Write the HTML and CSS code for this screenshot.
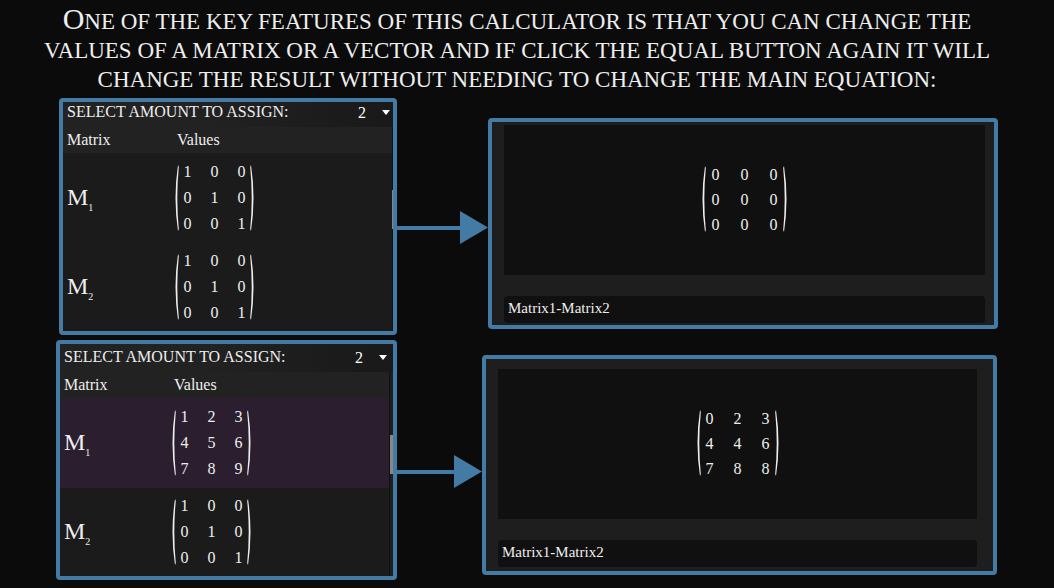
FILE: index.html
```html
<!DOCTYPE html>
<html lang="en">
<head>
<meta charset="utf-8">
<title>Matrix calculator</title>
<link rel="stylesheet" href="styles.css">
</head>
<body>
<svg class="defs" aria-hidden="true">
  <symbol id="paren" viewBox="0 0 5 68" preserveAspectRatio="none"><path d="M4 0Q-1 34 4 68L4.800 66Q1.800 34 4.800 2Z" fill="#eee"/></symbol>
  <symbol id="caret" viewBox="0 0 8 5"><path d="M0 0H8L4 5Z" fill="#fff"/></symbol>
</svg>
<main>
  <h1 class="title">One of the key features of this calculator is that you can change the<br>values of a matrix or a vector and if click the equal button again it will<br>change the result without needing to change the main equation:</h1>

  <section class="step step-before">
    <div class="panel">
      <div class="assign">
        <label for="amount1">SELECT AMOUNT TO ASSIGN:</label>
        <span class="picker"><select id="amount1"><option>2</option></select><svg class="caret"><use href="#caret"/></svg></span>
      </div>
      <div class="list">
        <table class="entries">
          <thead><tr><th class="name">Matrix</th><th>Values</th></tr></thead>
          <tbody>
            <tr><td class="name">M<sub>1</sub></td><td><div class="matrix"><svg class="paren"><use href="#paren"/></svg><div class="cells"><span>1</span><span>0</span><span>0</span><span>0</span><span>1</span><span>0</span><span>0</span><span>0</span><span>1</span></div><svg class="paren close"><use href="#paren"/></svg></div></td></tr>
            <tr><td class="name">M<sub>2</sub></td><td><div class="matrix"><svg class="paren"><use href="#paren"/></svg><div class="cells"><span>1</span><span>0</span><span>0</span><span>0</span><span>1</span><span>0</span><span>0</span><span>0</span><span>1</span></div><svg class="paren close"><use href="#paren"/></svg></div></td></tr>
          </tbody>
        </table>
        <div class="scroll"><div class="thumb"></div></div>
      </div>
    </div>
    <div class="arrow"><div class="shaft"></div><svg class="head" viewBox="0 0 28 33"><path d="M0 0L28 16.500L0 33Z" fill="#447ba5"/></svg></div>
    <div class="result">
      <div class="display"><div class="matrix wide"><svg class="paren"><use href="#paren"/></svg><div class="cells"><span>0</span><span>0</span><span>0</span><span>0</span><span>0</span><span>0</span><span>0</span><span>0</span><span>0</span></div><svg class="paren close"><use href="#paren"/></svg></div></div>
      <input class="equation" type="text" aria-label="Equation" value="Matrix1-Matrix2">
    </div>
  </section>

  <section class="step step-after">
    <div class="panel">
      <div class="assign">
        <label for="amount2">SELECT AMOUNT TO ASSIGN:</label>
        <span class="picker"><select id="amount2"><option>2</option></select><svg class="caret"><use href="#caret"/></svg></span>
      </div>
      <div class="list">
        <table class="entries">
          <thead><tr><th class="name">Matrix</th><th>Values</th></tr></thead>
          <tbody>
            <tr class="selected"><td class="name">M<sub>1</sub></td><td><div class="matrix"><svg class="paren"><use href="#paren"/></svg><div class="cells"><span>1</span><span>2</span><span>3</span><span>4</span><span>5</span><span>6</span><span>7</span><span>8</span><span>9</span></div><svg class="paren close"><use href="#paren"/></svg></div></td></tr>
            <tr><td class="name">M<sub>2</sub></td><td><div class="matrix"><svg class="paren"><use href="#paren"/></svg><div class="cells"><span>1</span><span>0</span><span>0</span><span>0</span><span>1</span><span>0</span><span>0</span><span>0</span><span>1</span></div><svg class="paren close"><use href="#paren"/></svg></div></td></tr>
          </tbody>
        </table>
        <div class="scroll"><div class="thumb"></div></div>
      </div>
    </div>
    <div class="arrow"><div class="shaft"></div><svg class="head" viewBox="0 0 28 33"><path d="M0 0L28 16.500L0 33Z" fill="#447ba5"/></svg></div>
    <div class="result">
      <div class="display"><div class="matrix wide"><svg class="paren"><use href="#paren"/></svg><div class="cells"><span>0</span><span>2</span><span>3</span><span>4</span><span>4</span><span>6</span><span>7</span><span>8</span><span>8</span></div><svg class="paren close"><use href="#paren"/></svg></div></div>
      <input class="equation" type="text" aria-label="Equation" value="Matrix1-Matrix2">
    </div>
  </section>
</main>
</body>
</html>
```
FILE: styles.css
```css
* { box-sizing: border-box; }

body {
  margin: 0;
  background: #0b0b0b;
  color: #eee;
  font: 16px/26px "Liberation Serif", serif;
}

.defs { display: block; width: 0; height: 0; }

.title {
  margin: 0;
  padding: 4px 30px 4px 10px;
  font-size: 23px;
  font-weight: 400;
  line-height: 29px;
  text-align: center;
  text-transform: uppercase;
}
.title::first-letter { font-size: 30px; line-height: 29px; }

.step { display: grid; }
.step-before {
  grid-template-columns: 338fr 91fr 510fr;
  margin: 0 56px 5px 59px;
}
.step-after {
  grid-template-columns: 341fr 85fr 515fr;
  margin: 0 57px 8px 56px;
}

.panel,
.result {
  border: 4px solid #447ba5;
  border-radius: 4px;
  background: #1e1e1e;
}
.panel { background: #1b1b1b; overflow: hidden; }

.assign {
  display: flex;
  justify-content: space-between;
  height: 25px;
  padding-left: 4px;
  background: linear-gradient(90deg, #222 40%, #191919);
  line-height: 19px;
}
.step-after .assign { height: 28px; padding-top: 3px; }
.picker { position: relative; display: flex; width: 39px; }
.step-after .picker { width: 42px; }
.picker select {
  width: 100%;
  height: 22px;
  padding: 0 0 0 4px;
  border: 0;
  background: transparent;
  color: #fff;
  font: 16px/22px "Liberation Serif", serif;
  appearance: none;
}
.caret { position: absolute; top: 8px; right: 3px; width: 8px; height: 5px; pointer-events: none; }
.step-after .caret { right: 6px; }

.list { display: flex; }
.entries { flex: 1; border-collapse: collapse; table-layout: fixed; }
.entries th {
  height: 26px;
  padding: 0 0 0 3px;
  background: #222;
  font-size: 16px;
  font-weight: 400;
  text-align: left;
}
.entries td { height: 90px; padding: 0; }
.entries tr:last-child td { height: 88px; }
.entries .name { width: 111px; padding-left: 4px; }
.entries td.name { font-size: 24px; }
.name sub { font-size: 10px; line-height: 10px; }
.selected { background: #2a1e2f; }

.scroll { width: 1px; padding-top: 63px; background: #111; }
.thumb { height: 39px; background: #888; }
.step-after .scroll { width: 4px; border-left: 1px solid #101010; background: #1e1e1e; }

.matrix { display: flex; align-items: center; width: 78px; }
.cells { flex: 1; display: grid; grid-template-columns: repeat(3, 27px); justify-content: center; text-align: center; }
.paren { flex: none; width: 5px; height: 66px; margin-right: -5px; }
.close { transform: scaleX(-1); margin: 0 0 0 -5px; }
.matrix.wide { width: 87px; line-height: 25px; }
.wide .cells { grid-template-columns: repeat(3, 29px); }
.step-after .matrix.wide { width: 84px; }
.step-after .wide .cells { grid-template-columns: repeat(3, 28px); }

.arrow { display: flex; align-items: center; align-self: start; margin-top: 113px; }
.step-after .arrow { margin-top: 115px; }
.shaft { flex: 1; height: 4px; background: #447ba5; }
.head { width: 28px; height: 33px; }

.result {
  display: flex;
  flex-direction: column;
  gap: 21px;
  align-self: start;
  margin-top: 20px;
  padding: 3px 9px 2px 12px;
}
.step-after .result { margin-top: 15px; padding: 10px 16px 4px 12px; }
.display {
  display: flex;
  align-items: center;
  justify-content: center;
  min-height: 150px;
  padding-bottom: 2px;
  background: #101010;
}
.equation {
  width: 100%;
  height: 27px;
  padding: 0 4px 2px;
  border: 0;
  border-radius: 4px;
  background: #101010;
  color: #eee;
  font: 15px/25px "Liberation Serif", serif;
}
```
